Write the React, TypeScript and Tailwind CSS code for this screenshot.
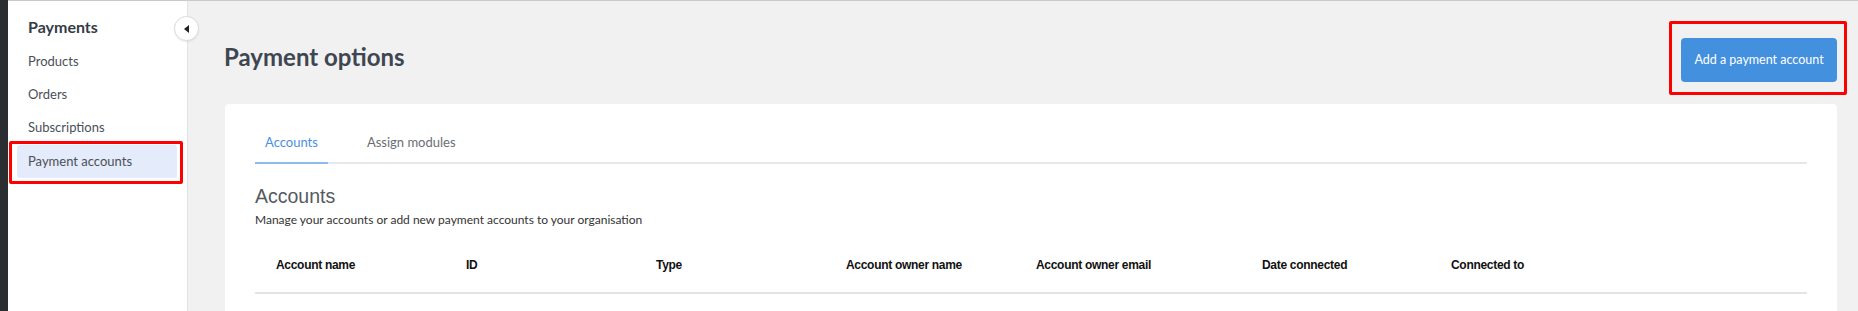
import React from "react";

const navItems = ["Products", "Orders", "Subscriptions", "Payment accounts"];

const columns: { label: string; w: string }[] = [
  { label: "Account name", w: "w-[190px]" },
  { label: "ID", w: "w-[190px]" },
  { label: "Type", w: "w-[190px]" },
  { label: "Account owner name", w: "w-[190px]" },
  { label: "Account owner email", w: "w-[226px]" },
  { label: "Date connected", w: "w-[189px]" },
  { label: "Connected to", w: "w-[190px]" },
];

export default function App() {
  return (
    <div className="relative flex h-[311px] w-[1858px] overflow-hidden bg-[#f1f1f1]">
      {/* dark strip */}
      <div className="w-[8px] shrink-0 bg-[#2b2e31]" />

      {/* sidebar */}
      <aside className="relative w-[180px] shrink-0 border-r border-[#e3e3e3] border-t border-t-[#c9c9c9] bg-white font-['Lato',sans-serif]">
        <div className="pl-[20px] pt-[16px] text-[16px] leading-[20px] font-bold text-[#333c47]">
          Payments
        </div>
        <nav className="mt-[8px] ml-[9px] mr-[10px] flex flex-col">
          {navItems.map((item) => {
            const active = item === "Payment accounts";
            return (
              <div
                key={item}
                className={
                  active
                    ? "flex h-[33.5px] items-center rounded-[3px] bg-[#e4ebfa] pl-[11px] text-[13px] text-[#4b5058]"
                    : "flex h-[33.3px] items-center pl-[11px] text-[13px] text-[#4b5058]"
                }
              >
                {item}
              </div>
            );
          })}
        </nav>
        {/* collapse toggle */}
        <button className="absolute left-[166px] top-[15px] flex h-[25px] w-[25px] items-center justify-center rounded-full border border-[#dcdcdc] bg-white shadow-[0_1px_2px_rgba(0,0,0,0.08)]">
          <span className="block h-0 w-0 border-y-[4px] border-r-[5px] border-y-transparent border-r-[#222]" />
        </button>
      </aside>

      {/* main */}
      <main className="flex-1 border-t border-[#c9c9c9] pl-[36px] pr-[21px] pt-[37px]">
        <div className="flex h-[44px] items-start justify-between">
          <h1 className="mt-[5px] font-['Lato',sans-serif] text-[24px] leading-[28px] font-bold text-[#3e4652]">
            Payment options
          </h1>
          <button className="h-[44px] w-[156px] rounded-[4px] bg-[#4390df] font-['Lato',sans-serif] text-[12.5px] text-white">
            Add a payment account
          </button>
        </div>

        <section className="ml-[1px] mt-[22px] rounded-[4px] bg-white px-[30px] pt-[28px] pb-[40px]">
          {/* tabs */}
          <div className="flex border-b-2 border-[#e6e7eb] font-['Lato',sans-serif] text-[13px] leading-[20px]">
            <div className="-mb-[2px] border-b-2 border-[#8bbbee] px-[10px] pb-[10px] text-[#4a90e2]">
              Accounts
            </div>
            <div className="ml-[29px] px-[10px] pb-[10px] text-[#6a6e74]">Assign modules</div>
          </div>

          <h2 className="mt-[20px] font-['Liberation_Sans',Arial,sans-serif] text-[19.5px] leading-[24px] font-normal text-[#555a60]">
            Accounts
          </h2>
          <p className="mt-[4px] font-['Lato',sans-serif] text-[12px] leading-[16px] text-[#333]">
            Manage your accounts or add new payment accounts to your organisation
          </p>

          <div className="mt-[29px] flex border-b-2 border-[#e2e4e8] pb-[19px] pl-[21px] font-['Liberation_Sans',Arial,sans-serif] text-[12px] leading-[16px] font-bold tracking-[-0.3px] text-[#111]">
            {columns.map((c) => (
              <div key={c.label} className={c.w + " shrink-0"}>
                {c.label}
              </div>
            ))}
          </div>
        </section>
      </main>

      {/* annotation boxes */}
      <div className="pointer-events-none absolute left-[9px] top-[141px] h-[43px] w-[174px] rounded-[2px] border-[3px] border-[#ff0000]" />
      <div className="pointer-events-none absolute left-[1669px] top-[21px] h-[74px] w-[178px] rounded-[2px] border-[3px] border-[#ff0000]" />
    </div>
  );
}
